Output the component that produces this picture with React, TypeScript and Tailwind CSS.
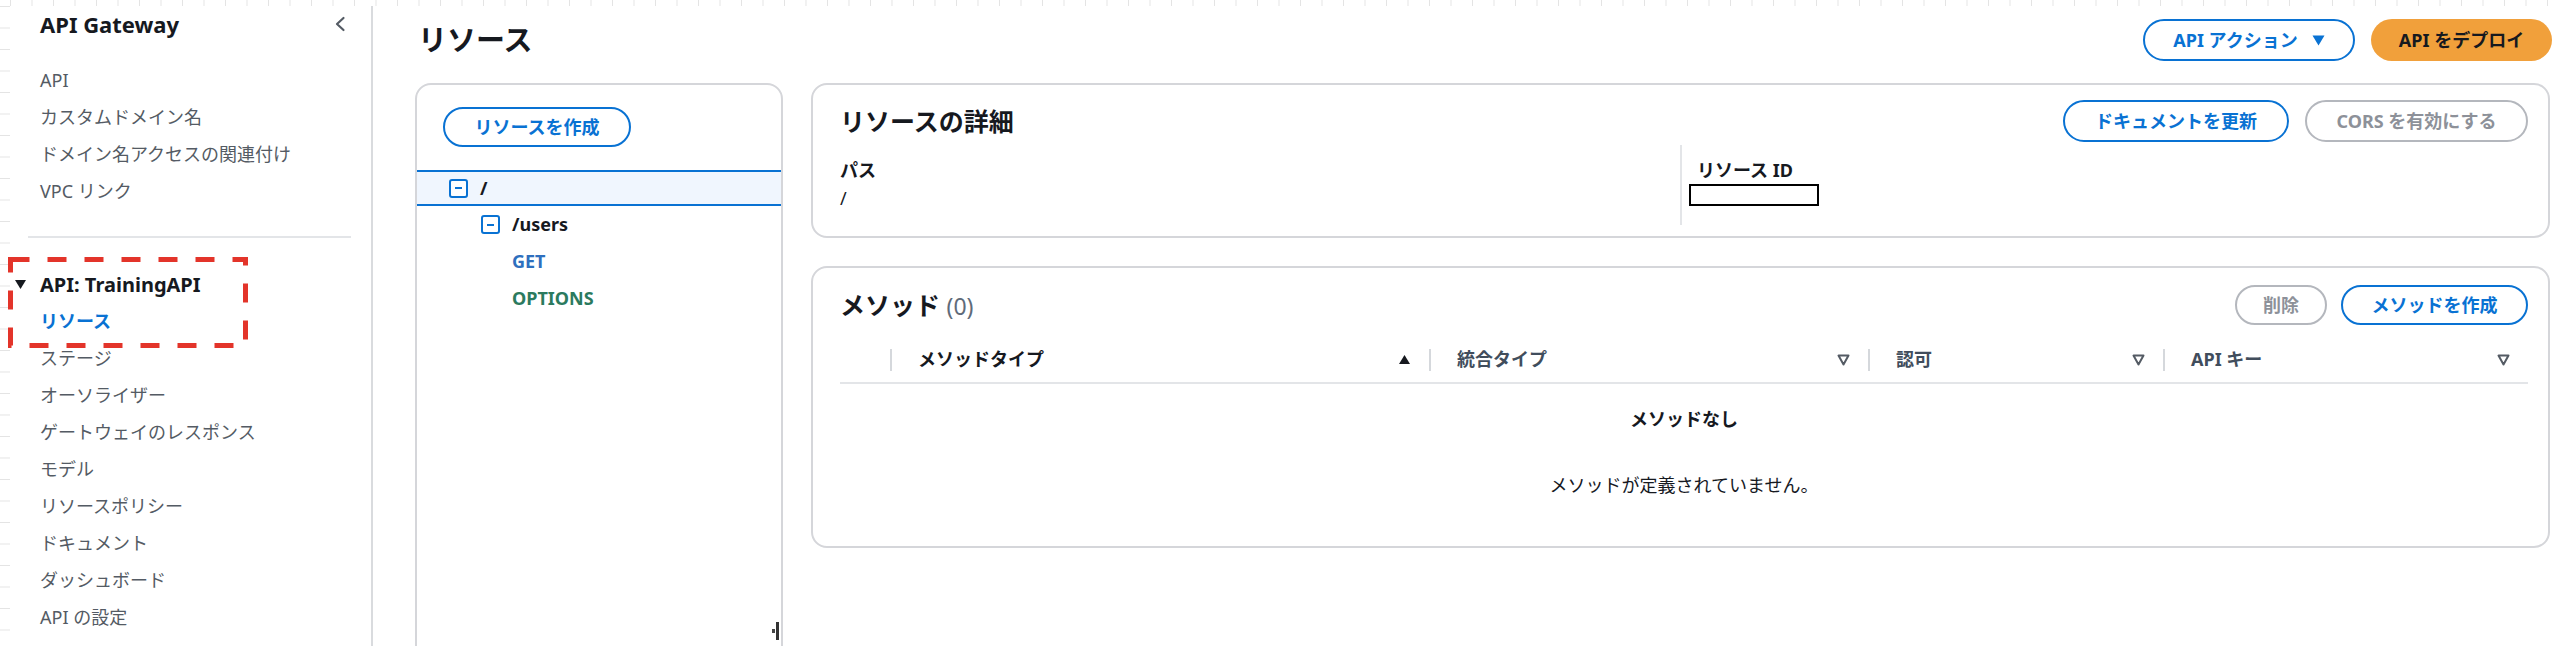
const navTop = ["API", "カスタムドメイン名", "ドメイン名アクセスの関連付け", "VPC リンク"];
const navApi = [
  "ステージ",
  "オーソライザー",
  "ゲートウェイのレスポンス",
  "モデル",
  "リソースポリシー",
  "ドキュメント",
  "ダッシュボード",
  "API の設定",
];

const columns = [
  { label: "メソッドタイプ", sorted: true },
  { label: "統合タイプ", sorted: false },
  { label: "認可", sorted: false },
  { label: "API キー", sorted: false },
];

function TreeToggle() {
  return (
    <span className="flex h-[19px] w-[19px] shrink-0 items-center justify-center rounded-[3px] border-2 border-[#0972d3] bg-white">
      <span className="h-[2px] w-[7px] bg-[#0972d3]" />
    </span>
  );
}

function SortIcon({ sorted }: { sorted: boolean }) {
  if (sorted) {
    return (
      <svg width="13" height="11" viewBox="0 0 13 11">
        <path d="M6.5 1 L12 10 L1 10 Z" fill="#16191f" />
      </svg>
    );
  }
  return (
    <svg width="13" height="12" viewBox="0 0 13 12">
      <path d="M1.5 1.5 L11.5 1.5 L6.5 10.5 Z" fill="none" stroke="#545b64" strokeWidth="2" strokeLinejoin="round" />
    </svg>
  );
}

function Sidebar() {
  return (
    <aside className="h-full w-[363px] shrink-0 border-r-2 border-[#d9dbde] bg-white">
      <div className="flex h-[36px] items-center justify-between pl-[30px] pr-[25px]">
        <span className="text-[22px] font-bold leading-[36px] text-[#16191f]">API Gateway</span>
        <svg width="12" height="16" viewBox="0 0 12 16">
          <path d="M9.5 2 L3 8 L9.5 14" fill="none" stroke="#545b64" strokeWidth="2.2" strokeLinecap="round" strokeLinejoin="round" />
        </svg>
      </div>

      <ul className="mt-[20px] pl-[30px] text-[18px] leading-[37px] text-[#545b64]">
        {navTop.map((item) => (
          <li key={item}>{item}</li>
        ))}
      </ul>

      <div className="ml-[18px] mr-[20px] mt-[26px] h-[2px] bg-[#e3e5e8]" />

      <div className="mt-[28px] flex h-[37px] items-center">
        <svg className="ml-[5px] mr-[14px]" width="11" height="9" viewBox="0 0 11 9">
          <path d="M0 0 L11 0 L5.5 9 Z" fill="#16191f" />
        </svg>
        <span className="text-[20px] font-bold text-[#16191f]">API: TrainingAPI</span>
      </div>
      <ul className="pl-[30px] text-[18px] leading-[37px] text-[#545b64]">
        <li className="font-bold text-[#0972d3]">リソース</li>
        {navApi.map((item) => (
          <li key={item}>{item}</li>
        ))}
      </ul>
    </aside>
  );
}

function ResourceTree() {
  return (
    <div className="relative h-[600px] w-[368px] shrink-0 rounded-[16px] border-2 border-[#d5d6da] bg-white">
      <div className="pl-[26px] pt-[22px]">
        <button className="h-[40px] w-[188px] rounded-full border-2 border-[#0972d3] text-[18px] font-bold text-[#0972d3]">
          リソースを作成
        </button>
      </div>

      <div className="mt-[23px] text-[18px]">
        <div className="flex h-[36px] items-center gap-[12px] border-y-2 border-[#0972d3] bg-[#f0f6fe] pl-[32px]">
          <TreeToggle />
          <span className="font-bold text-[#16191f]">/</span>
        </div>
        <div className="flex h-[37px] items-center gap-[12px] pl-[64px]">
          <TreeToggle />
          <span className="font-bold text-[#16191f]">/users</span>
        </div>
        <div className="flex h-[37px] items-center pl-[95px] font-bold text-[#2e6fbe]">GET</div>
        <div className="flex h-[37px] items-center pl-[95px] font-bold text-[#2b7a5e]">OPTIONS</div>
      </div>

      {/* resize handle */}
      <div className="absolute left-[355px] top-[537px] flex items-center gap-[1px]">
        <span className="h-[4px] w-[3px] bg-[#444]" />
        <span className="h-[18px] w-[3px] bg-[#333]" />
      </div>
    </div>
  );
}

function ResourceDetails() {
  return (
    <div className="h-[155px] rounded-[16px] border-2 border-[#d5d6da] bg-white pl-[27px] pr-[20px] pt-[15px]">
      <div className="flex h-[42px] items-center justify-between">
        <h2 className="text-[25px] font-bold leading-[42px] text-[#16191f]">リソースの詳細</h2>
        <div className="flex gap-[16px]">
          <button className="h-[42px] w-[226px] rounded-full border-2 border-[#0972d3] text-[18px] font-bold text-[#0972d3]">
            ドキュメントを更新
          </button>
          <button className="h-[42px] w-[223px] rounded-full border-2 border-[#b4b7bd] text-[18px] font-bold text-[#8d9199]">
            CORS を有効にする
          </button>
        </div>
      </div>

      <div className="mt-[3px] grid h-[80px] grid-cols-[840px_1fr] text-[18px] leading-[28px] text-[#16191f]">
        <div className="pt-[11px]">
          <div className="font-bold">パス</div>
          <div>/</div>
        </div>
        <div className="border-l-2 border-[#e3e5e8] pl-[7px] pt-[11px]">
          <div className="pl-[8px] font-bold">リソース ID</div>
          <div className="h-[22px] w-[130px] border-2 border-black bg-white" />
        </div>
      </div>
    </div>
  );
}

function Methods() {
  return (
    <div className="h-[282px] rounded-[16px] border-2 border-[#d5d6da] bg-white pl-[27px] pr-[20px] pt-[17px]">
      <div className="flex h-[40px] items-center justify-between">
        <h2 className="text-[25px] font-bold leading-[40px] text-[#16191f]">
          メソッド <span className="text-[23px] font-normal text-[#5f6b7a]">(0)</span>
        </h2>
        <div className="flex gap-[14px]">
          <button className="h-[40px] w-[92px] rounded-full border-2 border-[#b4b7bd] text-[18px] font-bold text-[#8d9199]">
            削除
          </button>
          <button className="h-[40px] w-[187px] rounded-full border-2 border-[#0972d3] text-[18px] font-bold text-[#0972d3]">
            メソッドを作成
          </button>
        </div>
      </div>

      <div className="mt-[12px] grid h-[47px] grid-cols-[50px_539px_439px_295px_1fr] border-b-2 border-[#e3e5e8] text-[18px] font-bold">
        <div />
        {columns.map((col) => (
          <div key={col.label} className="flex h-full items-center">
            <span className="h-[22px] w-[2px] bg-[#d5d8dc]" />
            <span className={`ml-[26px] ${col.sorted ? "text-[#16191f]" : "text-[#414d5c]"}`}>{col.label}</span>
            <span className="ml-auto mr-[18px] flex">
              <SortIcon sorted={col.sorted} />
            </span>
          </div>
        ))}
      </div>

      <div className="flex flex-col items-center text-[18px] leading-[28px] text-[#16191f]">
        <div className="mt-[21px] font-bold">メソッドなし</div>
        <div className="mt-[38px]">メソッドが定義されていません。</div>
      </div>
    </div>
  );
}

export default function App() {
  return (
    <div className="relative h-[646px] w-[2558px] overflow-hidden bg-white bg-[linear-gradient(to_right,#e4e4e4_1px,transparent_1px),linear-gradient(to_bottom,#e4e4e4_1px,transparent_1px)] bg-size-[21.5px_21.5px] bg-position-[10px_6px] font-['Noto_Sans','Noto_Sans_CJK_JP',sans-serif]">
      <div className="ml-[10px] mt-[6px] flex h-[640px] w-[2548px] bg-white">
        <Sidebar />

        <main className="flex-1 pl-[42px] pr-[8px]">
          <div className="-mr-[2px] mt-[13px] flex h-[42px] items-center justify-between">
            <h1 className="pl-[3px] text-[29px] font-bold leading-[42px] text-[#16191f]">リソース</h1>
            <div className="flex gap-[16px]">
              <button className="flex h-[42px] w-[212px] items-center justify-center gap-[14px] rounded-full border-2 border-[#0972d3] text-[18px] font-bold text-[#0972d3]">
                API アクション
                <svg width="13" height="11" viewBox="0 0 13 11">
                  <path d="M0.5 0.5 L12.5 0.5 L6.5 10.5 Z" fill="#0972d3" />
                </svg>
              </button>
              <button className="h-[42px] w-[181px] rounded-full bg-[#f1a03b] text-[18px] font-bold text-[#16191f]">
                API をデプロイ
              </button>
            </div>
          </div>

          <div className="mt-[22px] flex gap-[28px]">
            <ResourceTree />
            <div className="flex flex-1 flex-col gap-[28px]">
              <ResourceDetails />
              <Methods />
            </div>
          </div>
        </main>
      </div>

      {/* red annotation around the selected nav group */}
      <svg className="absolute left-[8px] top-[257px]" width="240" height="91" viewBox="0 0 240 91">
        <rect x="2.5" y="2.5" width="235" height="86" fill="none" stroke="#e3342a" strokeWidth="5" strokeDasharray="19 18" />
      </svg>
    </div>
  );
}
